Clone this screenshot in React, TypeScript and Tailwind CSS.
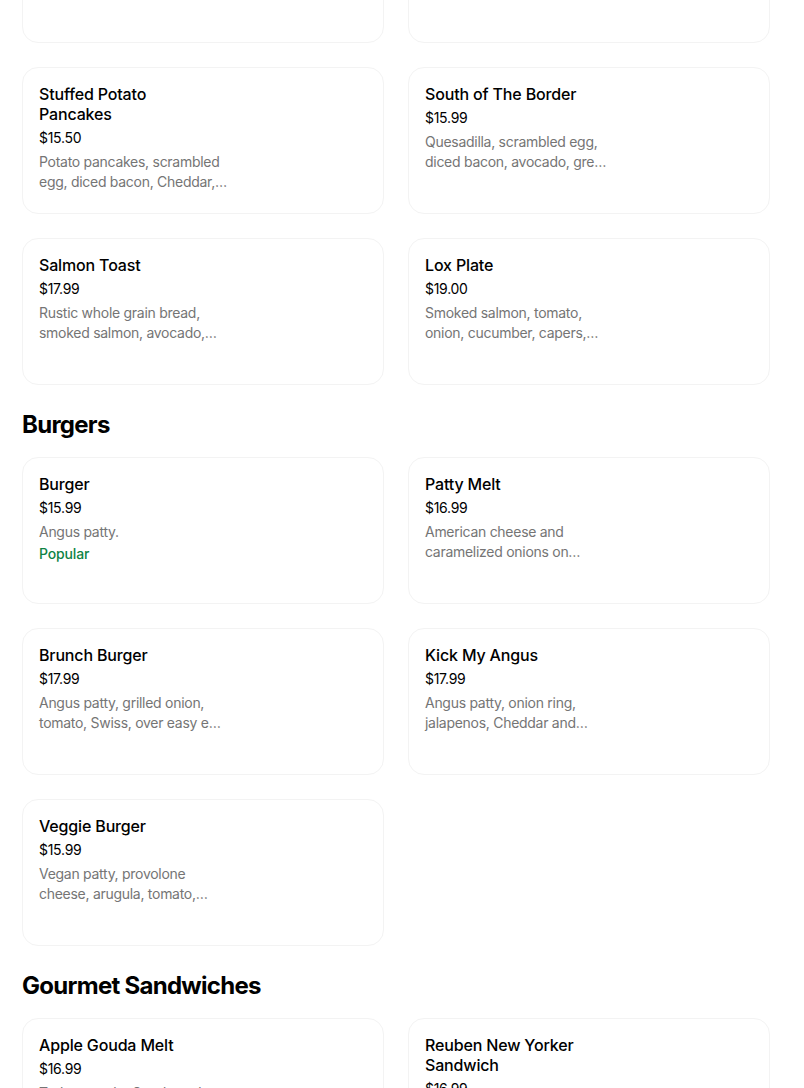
import React from "react";

type Item = { name: string[]; price: string; desc: string[]; popular?: boolean };

function Card({ item }: { item?: Item }) {
  return (
    <div className="h-[147px] rounded-2xl border border-[#f3f3f3] bg-white p-4">
      {item && (
        <div className="flex flex-col">
          <div className="text-[16px] font-medium leading-5 tracking-[-0.01em] text-black">
            {item.name.map((l, i) => (
              <div key={i} className="whitespace-nowrap">{l}</div>
            ))}
          </div>
          <div className="mt-1 text-[14px] leading-5 tracking-[-0.02em] text-black">{item.price}</div>
          <div className="mt-1 text-[14px] leading-5 tracking-[-0.02em] text-[#757575]">
            {item.desc.map((l, i) => (
              <div key={i} className="whitespace-nowrap">{l}</div>
            ))}
          </div>
          {item.popular && (
            <div className="mt-[2px] text-[14px] font-medium leading-5 tracking-[-0.01em] text-[#0e8345]">Popular</div>
          )}
        </div>
      )}
    </div>
  );
}

function Grid({ items }: { items: (Item | undefined)[] }) {
  return (
    <div className="grid grid-cols-2 gap-6">
      {items.map((it, i) => (
        <Card key={i} item={it} />
      ))}
    </div>
  );
}

function Heading({ children }: { children: React.ReactNode }) {
  return (
    <h2 className="mt-6 mb-4 text-[24px] font-bold leading-8 tracking-[-0.03em] text-black">{children}</h2>
  );
}

const breakfast: (Item | undefined)[] = [
  undefined,
  undefined,
  {
    name: ["Stuffed Potato", "Pancakes"],
    price: "$15.50",
    desc: ["Potato pancakes, scrambled", "egg, diced bacon, Cheddar,…"],
  },
  {
    name: ["South of The Border"],
    price: "$15.99",
    desc: ["Quesadilla, scrambled egg,", "diced bacon, avocado, gre…"],
  },
  {
    name: ["Salmon Toast"],
    price: "$17.99",
    desc: ["Rustic whole grain bread,", "smoked salmon, avocado,…"],
  },
  {
    name: ["Lox Plate"],
    price: "$19.00",
    desc: ["Smoked salmon, tomato,", "onion, cucumber, capers,…"],
  },
];

const burgers: (Item | undefined)[] = [
  { name: ["Burger"], price: "$15.99", desc: ["Angus patty."], popular: true },
  {
    name: ["Patty Melt"],
    price: "$16.99",
    desc: ["American cheese and", "caramelized onions on…"],
  },
  {
    name: ["Brunch Burger"],
    price: "$17.99",
    desc: ["Angus patty, grilled onion,", "tomato, Swiss, over easy e…"],
  },
  {
    name: ["Kick My Angus"],
    price: "$17.99",
    desc: ["Angus patty, onion ring,", "jalapenos, Cheddar and…"],
  },
  {
    name: ["Veggie Burger"],
    price: "$15.99",
    desc: ["Vegan patty, provolone", "cheese, arugula, tomato,…"],
  },
];

const sandwiches: (Item | undefined)[] = [
  {
    name: ["Apple Gouda Melt"],
    price: "$16.99",
    desc: ["Turkey, apple, Gouda and", "honey mustard on sourdo…"],
  },
  {
    name: ["Reuben New Yorker", "Sandwich"],
    price: "$16.99",
    desc: ["Corned beef, sauerkraut,", "Swiss cheese and Russia…"],
  },
];

export default function App() {
  return (
    <div
      className="h-[1088px] w-[804px] overflow-hidden bg-white"
      style={{ fontFamily: "Inter, 'Noto Sans', sans-serif" }}
    >
      <div className="-mt-[104px] pl-[22px] pr-[34px]">
        <Grid items={breakfast} />
        <Heading>Burgers</Heading>
        <Grid items={burgers} />
        <Heading>Gourmet Sandwiches</Heading>
        <Grid items={sandwiches} />
      </div>
    </div>
  );
}
